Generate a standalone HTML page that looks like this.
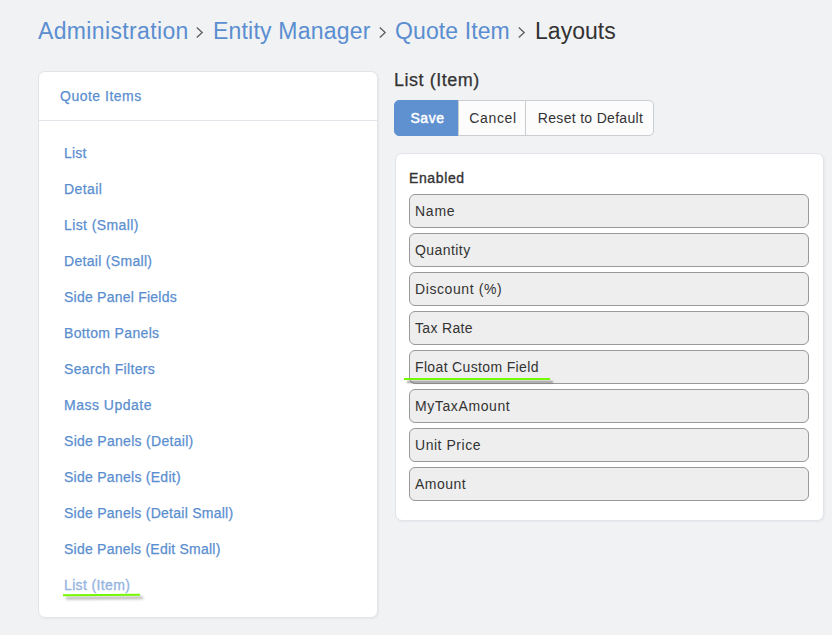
<!DOCTYPE html>
<html><head><meta charset="utf-8">
<style>
*{box-sizing:border-box;margin:0;padding:0}
html,body{width:832px;height:635px;overflow:hidden;background:#f1f2f4;font-family:"Liberation Sans",sans-serif;color:#333}
.abs{position:absolute;white-space:nowrap}
.bc{font-size:23px;color:#5a8ed0;line-height:1}
.bc.cur{color:#333}
.chev{position:absolute}
.panel{position:absolute;background:#fff;border:1px solid #e1e4e9;border-radius:7px;box-shadow:1px 1px 2px rgba(20,30,60,0.05)}
.lnk{position:absolute;font-size:14px;color:#5a8ed0;-webkit-text-stroke:0.25px currentColor;line-height:1;white-space:nowrap}
.btn{position:absolute;top:100px;height:36px;border:1px solid #c9ccd1;background:#fcfcfd;font-size:14px;color:#333;line-height:34px;text-align:center;padding-left:2px}
.fld{position:absolute;left:409px;width:400px;height:34px;border:1px solid #999;border-radius:6px;background:#eee;font-size:14px;color:#333;line-height:32px;padding-left:5px;white-space:nowrap}
</style></head><body>
<!-- breadcrumb -->
<div id="t0" class="abs bc" style="letter-spacing:0.358px;left:38px;top:20px">Administration</div>
<svg class="chev" style="left:194.8px;top:26px" width="10" height="13" viewBox="0 0 10 13"><path d="M1.8 1.6 L7.2 6.5 L1.8 11.4" fill="none" stroke="#5e5e5e" stroke-width="1.3"/></svg>
<div id="t1" class="abs bc" style="letter-spacing:0.2px;left:213px;top:20px">Entity Manager</div>
<svg class="chev" style="left:377.5px;top:26px" width="10" height="13" viewBox="0 0 10 13"><path d="M1.8 1.6 L7.2 6.5 L1.8 11.4" fill="none" stroke="#5e5e5e" stroke-width="1.3"/></svg>
<div id="t2" class="abs bc" style="letter-spacing:0.1px;left:395px;top:20px">Quote Item</div>
<svg class="chev" style="left:516.5px;top:26px" width="10" height="13" viewBox="0 0 10 13"><path d="M1.8 1.6 L7.2 6.5 L1.8 11.4" fill="none" stroke="#5e5e5e" stroke-width="1.3"/></svg>
<div id="t3" class="abs bc cur" style="letter-spacing:0.025px;left:535px;top:20px">Layouts</div>

<!-- left panel -->
<div class="panel" style="left:38px;top:71px;width:340px;height:547px">
  <div style="position:absolute;left:0;right:0;top:48px;height:1px;background:#e1e4e9"></div>
</div>
<div id="t4" class="lnk" style="letter-spacing:0.5px;left:60px;top:89px">Quote Items</div>
<div id="t5" class="lnk" style="letter-spacing:0.167px;left:64px;top:146px">List</div>
<div id="t6" class="lnk" style="letter-spacing:0.4px;left:64px;top:182px">Detail</div>
<div id="t7" class="lnk" style="letter-spacing:0.406px;left:64px;top:218px">List (Small)</div>
<div id="t8" class="lnk" style="letter-spacing:0.306px;left:64px;top:254px">Detail (Small)</div>
<div id="t9" class="lnk" style="letter-spacing:0.236px;left:64px;top:290px">Side Panel Fields</div>
<div id="t10" class="lnk" style="letter-spacing:0.337px;left:64px;top:326px">Bottom Panels</div>
<div id="t11" class="lnk" style="letter-spacing:0.345px;left:64px;top:362px">Search Filters</div>
<div id="t12" class="lnk" style="letter-spacing:0.5px;left:64px;top:398px">Mass Update</div>
<div id="t13" class="lnk" style="letter-spacing:0.288px;left:64px;top:434px">Side Panels (Detail)</div>
<div id="t14" class="lnk" style="letter-spacing:0.266px;left:64px;top:470px">Side Panels (Edit)</div>
<div id="t15" class="lnk" style="letter-spacing:0.26px;left:64px;top:506px">Side Panels (Detail Small)</div>
<div id="t16" class="lnk" style="letter-spacing:0.234px;left:64px;top:542px">Side Panels (Edit Small)</div>
<div id="t17" class="lnk" style="letter-spacing:0.36px;left:64px;top:578px;color:#96b5e0;-webkit-text-stroke:0.35px currentColor">List (Item)</div>

<!-- right -->
<div id="t18" class="abs" style="letter-spacing:0.53px;left:394px;top:71px;font-size:18px;line-height:1;color:#333;-webkit-text-stroke:0.25px currentColor">List (Item)</div>
<div id="t19" class="btn" style="letter-spacing:0.5px;left:394px;width:65px;background:#5f91d0;border-color:#5f91d0;color:#fff;-webkit-text-stroke:0.45px currentColor;border-radius:5px 0 0 5px">Save</div>
<div id="t20" class="btn" style="letter-spacing:0.68px;left:458px;width:68px">Cancel</div>
<div id="t21" class="btn" style="letter-spacing:0.31px;left:525px;width:129px;border-radius:0 5px 5px 0">Reset to Default</div>

<div class="panel" style="left:395px;top:153px;width:429px;height:368px"></div>
<div id="t22" class="abs" style="letter-spacing:0.62px;left:409px;top:171px;font-size:14px;-webkit-text-stroke:0.35px currentColor;line-height:1;color:#333">Enabled</div>
<div id="t23" class="fld" style="letter-spacing:0.75px;top:194px">Name</div>
<div id="t24" class="fld" style="letter-spacing:0.43px;top:233px">Quantity</div>
<div id="t25" class="fld" style="letter-spacing:0.592px;top:272px">Discount (%)</div>
<div id="t26" class="fld" style="letter-spacing:0.32px;top:311px">Tax Rate</div>
<div id="t27" class="fld" style="letter-spacing:0.351px;top:350px">Float Custom Field</div>
<div id="t28" class="fld" style="letter-spacing:0.6px;top:389px">MyTaxAmount</div>
<div id="t29" class="fld" style="letter-spacing:0.53px;top:428px">Unit Price</div>
<div id="t30" class="fld" style="letter-spacing:0.5px;top:467px">Amount</div>

<div style="position:absolute;left:63px;top:594px;width:77px;height:2px;background:#74f800;box-shadow:3px 3px 3px rgba(0,0,0,0.4);transform:rotate(-0.5deg)"></div>
<div style="position:absolute;left:404px;top:377.6px;width:146px;height:2.2px;background:#74f800;box-shadow:3px 3px 2px rgba(0,0,0,0.38)"></div>
</body></html>
